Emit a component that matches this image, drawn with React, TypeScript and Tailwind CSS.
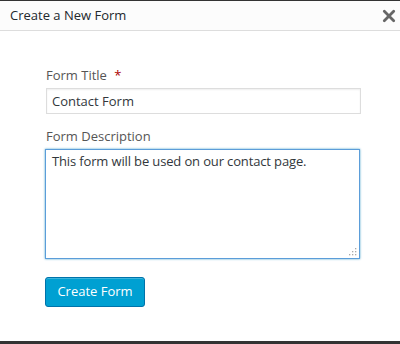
import React from "react";

export default function App() {
  const font = { fontFamily: '"Open Sans", "Noto Sans", sans-serif' };
  return (
    <div className="w-[400px] h-[344px] bg-white flex flex-col overflow-hidden" style={font}>
      <div className="h-px bg-[#333]" />
      <div className="h-[30px] bg-[#fcfcfc] border-b border-[#ddd] flex items-center justify-between pl-[10px] pr-[3px] shrink-0">
        <span className="text-[13px] text-[#23282d]">Create a New Form</span>
        <svg width="14" height="14" viewBox="0 0 14 14" className="mr-[1px]">
          <path d="M2.3 2.3 L11.7 11.7 M11.7 2.3 L2.3 11.7" stroke="#666" strokeWidth="2.8" strokeLinecap="round" />
        </svg>
      </div>
      <div className="flex-1 flex flex-col pl-[46px] pr-[39px] pt-[35px]">
        <label className="text-[13px] leading-[18px] text-[#555] h-[18px]">
          Form Title <span className="text-[#a00] ml-[4px]">*</span>
        </label>
        <input
          readOnly
          value="Contact Form"
          className="mt-[4px] h-[26px] w-[315px] border border-[#ddd] shadow-[inset_0_1px_2px_rgba(0,0,0,0.07)] px-[5px] text-[13px] text-[#32373c] outline-none bg-white"
          style={font}
        />
        <label className="mt-[13px] text-[13px] leading-[18px] text-[#555] h-[18px]">Form Description</label>
        <div className="relative mt-[4px] -ml-px w-[315px] h-[110px]">
          <textarea
            readOnly
            value="This form will be used on our contact page."
            className="w-full h-full resize-none border border-[#5b9dd9] shadow-[0_0_2px_rgba(30,140,190,0.8)] px-[6px] py-[2px] text-[13px] leading-[19px] tracking-[-0.14px] text-[#32373c] outline-none bg-white"
            style={font}
          />
          <svg className="absolute right-[3px] bottom-[3px]" width="9" height="9" viewBox="0 0 9 9">
            <rect x="7" y="1" width="1.3" height="1.3" fill="#aaa" />
            <rect x="4" y="4" width="1.3" height="1.3" fill="#aaa" />
            <rect x="7" y="4" width="1.3" height="1.3" fill="#aaa" />
            <rect x="1" y="7" width="1.3" height="1.3" fill="#aaa" />
            <rect x="4" y="7" width="1.3" height="1.3" fill="#aaa" />
            <rect x="7" y="7" width="1.3" height="1.3" fill="#aaa" />
          </svg>
        </div>
        <div className="mt-[18px] -ml-px">
          <button className="h-[30px] w-[100px] rounded-[3px] bg-[#00a0d2] border border-[#0073aa] text-white text-[13px] shadow-[inset_0_1px_0_rgba(120,200,230,0.5)]" style={font}>
            Create Form
          </button>
        </div>
      </div>
      <div className="h-[3px] bg-[#333] shrink-0" />
    </div>
  );
}
